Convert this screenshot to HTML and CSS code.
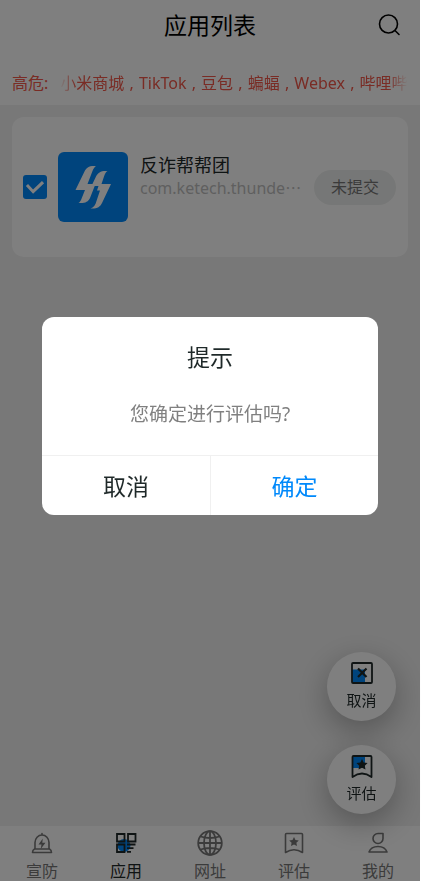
FILE: index.html
```html
<!DOCTYPE html>
<html lang="zh-CN">
<head>
<meta charset="utf-8">
<meta name="viewport" content="width=device-width, initial-scale=1">
<title>应用列表</title>
<link rel="stylesheet" href="styles.css">
</head>
<body>
<div class="app">
  <header class="header">
    <h1 class="header-title">应用列表</h1>
    <button class="search" type="button" aria-label="搜索">
      <svg width="24" height="24" viewBox="0 0 24 24" fill="none" stroke="currentColor" stroke-width="1.6" stroke-linecap="round"><circle cx="11.5" cy="11" r="9"/><path d="M18 17.5l4 4"/></svg>
    </button>
  </header>
  <div class="risk">
    <span class="risk-label">高危:</span>
    <p class="risk-list">小米商城 <span class="comma">,</span> TikTok <span class="comma">,</span> 豆包 <span class="comma">,</span> 蝙蝠 <span class="comma">,</span> Webex <span class="comma">,</span> 哔哩哔</p>
  </div>

  <main class="content">
    <article class="card">
      <input class="check" type="checkbox" id="app-1" checked>
      <svg class="logo" viewBox="0 0 70 70" aria-hidden="true">
        <rect width="70" height="70" rx="6" fill="#0089fb"/>
        <path fill="#fff" d="M38 14C31 13.500 28.500 15.500 26.500 19.500L17.500 38H27L24 45.500C23 48.500 22 50 20.500 51C27 51.500 30 50 32 46L37.500 32H29.500L34.500 19C35.500 16.500 36.700 15 38 14Z"/>
        <path fill="#fff" d="M49.500 19C43 18.500 40 20.500 38 24.500L33.500 34H40.500L39 38.500H42L38.500 49C37.500 53 35.500 55.500 32.500 56.500C39 57 42 55 44 51L53 32H43.500L46 24.500C47 21.500 48 20 49.500 19Z"/>
      </svg>
      <label class="info" for="app-1">
        <span class="app-name">反诈帮帮团</span>
        <span class="package">com.ketech.thunde⋯</span>
      </label>
      <span class="status">未提交</span>
    </article>
  </main>

  <nav class="tabs">
    <a class="tab" href="#alert">
      <svg class="tab-icon" viewBox="0 0 26 26" fill="none" stroke="currentColor" stroke-width="1.6" stroke-linejoin="round" stroke-linecap="round"><path d="M6 19v-6.500a7 7.500 0 0 1 14 0V19M13 5V3.500M5.500 19h15q2 1 2 3.500h-19q0-2.500 2-3.500z"/><path fill="currentColor" stroke="none" d="M13.800 8.500l-4.300 6h3l-.8 4.500 4.800-6.200h-3.200z"/></svg>
      <span>宣防</span>
    </a>
    <a class="tab active" href="#apps" aria-current="page">
      <svg class="tab-icon" viewBox="0 0 26 26" fill="none" stroke="currentColor" stroke-width="1.8"><circle cx="11" cy="15.500" r="6.500" fill="#0089fb" stroke="none"/><path d="M4 4h7.500v7.500H4zM15 4h7.500v7.500H15zM4 14.500h7.500V22H4zM14 14.500h8.500M14 18.200h6.500M14 21.800h4"/></svg>
      <span>应用</span>
    </a>
    <a class="tab" href="#web">
      <svg class="tab-icon" viewBox="0 0 26 26" fill="none" stroke="currentColor" stroke-width="1.8"><circle cx="13" cy="13" r="11.800"/><ellipse cx="13" cy="13" rx="6" ry="11.800"/><path d="M13 1v24M1 13h24M3.500 6.500q9.500 3 19 0M3.500 19.500q9.500-3 19 0"/></svg>
      <span>网址</span>
    </a>
    <a class="tab" href="#review">
      <svg class="tab-icon" viewBox="0 0 26 26" fill="none" stroke="currentColor" stroke-width="1.6" stroke-linejoin="round"><path d="M4.500 4.500q0-1 1-1h15q1 0 1 1v18q-8.500-5.500-17 0z"/><path fill="currentColor" stroke="none" d="M13 7l1.500 3 3.300.5-2.400 2.300.6 3.300-3-1.600-3 1.600.6-3.300-2.400-2.300 3.300-.5z"/></svg>
      <span>评估</span>
    </a>
    <a class="tab" href="#me">
      <svg class="tab-icon" viewBox="0 0 26 26" fill="none" stroke="currentColor" stroke-width="1.600" stroke-linejoin="round"><path d="M13 3.500h5V8.500a5 5 0 1 1-5-5zM4 22q2-5.500 9-5.500t9 5.500z"/></svg>
      <span>我的</span>
    </a>
  </nav>

  <div class="floating">
    <button class="fab" type="button">
      <svg width="24" height="24" viewBox="0 0 24 24" fill="none" stroke="currentColor" stroke-width="1.800" stroke-linejoin="round"><path d="M2 8.500h13v13H2z" fill="#0089fb" stroke="none"/><rect x="2" y="2" width="20" height="20" rx="1"/><path stroke-width="2.200" d="M8 7.500l8.500 8.500M16.500 7.500L8 16"/></svg>
      <span>取消</span>
    </button>
    <button class="fab" type="button">
      <svg width="24" height="24" viewBox="0 0 24 24" fill="none" stroke="currentColor" stroke-width="1.800" stroke-linejoin="round"><path d="M3 2h12v12H3z" fill="#0089fb" stroke="none"/><path d="M2.500 3q0-1 1-1h17q1 0 1 1v20q-9.500-7-19 0z"/><path fill="currentColor" stroke="none" d="M12 5l1.700 3.500 3.900.5-2.800 2.700.7 3.900-3.500-1.900-3.500 1.900.7-3.900-2.800-2.700 3.900-.5z"/></svg>
      <span>评估</span>
    </button>
  </div>
</div>

<div class="overlay">
  <section class="dialog" role="dialog" aria-modal="true" aria-labelledby="dialog-title">
    <h2 class="dialog-title" id="dialog-title">提示</h2>
    <p class="dialog-text">您确定进行评估吗?</p>
    <div class="dialog-actions">
      <button class="action" type="button">取消</button>
      <button class="action confirm" type="button">确定</button>
    </div>
  </section>
</div>
</body>
</html>
```
FILE: styles.css
```css
* {
  box-sizing: border-box;
}

body {
  margin: 0;
  padding-right: 1px;
  background: #fff;
  color: #1f2929;
  font-family: "Noto Sans", "Noto Sans CJK SC", sans-serif;
}

h1, h2, p {
  margin: 0;
  font-weight: 400;
}

button {
  padding: 0;
  border: 0;
  background: none;
  color: inherit;
  font: inherit;
  cursor: pointer;
}

svg {
  display: block;
}

.app {
  display: flex;
  flex-direction: column;
  min-height: 100vh;
  background: #f1f1f1;
}

.header {
  display: grid;
  grid-template-columns: 1fr auto 1fr;
  align-items: center;
  height: 50px;
  padding: 0 19px;
  background: #fff;
}

.header-title {
  grid-column: 2;
  color: #000;
  font-size: 23px;
  line-height: 32px;
}

.search {
  justify-self: end;
  color: #000;
}

.risk {
  display: flex;
  gap: 12px;
  height: 55px;
  padding: 21px 12px 0 12px;
  background: #fff;
  color: #f2584a;
  font-size: 16px;
  line-height: 24px;
}

.risk-label {
  flex: none;
}

.risk-list {
  flex: 1;
  min-width: 0;
  height: 24px;
  overflow: hidden;
  white-space: nowrap;
  mask-image: linear-gradient(to right, transparent, #000 16px, #000 calc(100% - 20px), transparent);
}

.comma {
  margin: 0 1px;
}

.content {
  flex: 1;
  padding: 12px;
}

.card {
  display: flex;
  align-items: center;
  height: 140px;
  padding: 0 12px 0 11px;
  border-radius: 12px;
  background: #fff;
}

.check {
  flex: none;
  width: 24px;
  height: 24px;
  margin: 0 11px 0 0;
  border-radius: 3px;
  appearance: none;
  background: #0089fb;
}

.check::before {
  content: "";
  display: block;
  width: 24px;
  height: 24px;
  background: #fff;
  clip-path: polygon(12% 46%, 21% 37%, 42% 60%, 79% 25%, 88% 34%, 42% 78%);
}

.logo {
  flex: none;
  width: 70px;
  height: 70px;
  margin-right: 12px;
}

.info {
  display: flex;
  flex: 1;
  flex-direction: column;
  align-self: flex-start;
  min-width: 0;
  padding-top: 36px;
}

.app-name {
  font-size: 18px;
  line-height: 24px;
}

.package {
  color: #bfbfbf;
  font-size: 16px;
  line-height: 22px;
  white-space: nowrap;
}

.status {
  flex: none;
  padding: 5px 17px;
  border-radius: 18px;
  background: #edefee;
  color: #777;
  font-size: 16px;
  line-height: 25px;
}

.tabs {
  display: grid;
  grid-template-columns: repeat(5, 1fr);
  height: 55px;
  background: #fff;
}

.tab {
  display: flex;
  flex-direction: column;
  align-items: center;
  gap: 6px;
  padding-top: 4px;
  color: #777;
  font-size: 16px;
  line-height: 18px;
  text-decoration: none;
}

.tab.active {
  color: #1f2929;
}

.tab-icon {
  width: 26px;
  height: 26px;
}

.floating {
  position: fixed;
  right: 25px;
  bottom: 67px;
  display: flex;
  flex-direction: column;
  gap: 24px;
}

.fab {
  display: flex;
  flex-direction: column;
  align-items: center;
  gap: 5px;
  width: 69px;
  height: 69px;
  padding-top: 9px;
  border-radius: 50%;
  background: #fff;
  box-shadow: 0 10px 32px rgba(0, 0, 0, 0.3);
  font-size: 15px;
  line-height: 20px;
}

.overlay {
  position: fixed;
  inset: 0 1px 0 0;
  display: flex;
  align-items: center;
  justify-content: center;
  padding-bottom: 49px;
  background: rgba(0, 0, 0, 0.5);
}

.dialog {
  width: 80%;
  overflow: hidden;
  border-radius: 12px;
  background: #fff;
  text-align: center;
}

.dialog-title {
  padding-top: 24px;
  font-size: 23px;
  line-height: 32px;
}

.dialog-text {
  padding: 28px 16px;
  color: #808080;
  font-size: 19px;
  line-height: 26px;
}

.dialog-actions {
  display: grid;
  grid-template-columns: 1fr 1fr;
  border-top: 1px solid #f0f0f0;
}

.action {
  height: 59px;
  font-size: 23px;
  line-height: 32px;
}

.confirm {
  border-left: 1px solid #f0f0f0;
  color: #0089fb;
}
```
